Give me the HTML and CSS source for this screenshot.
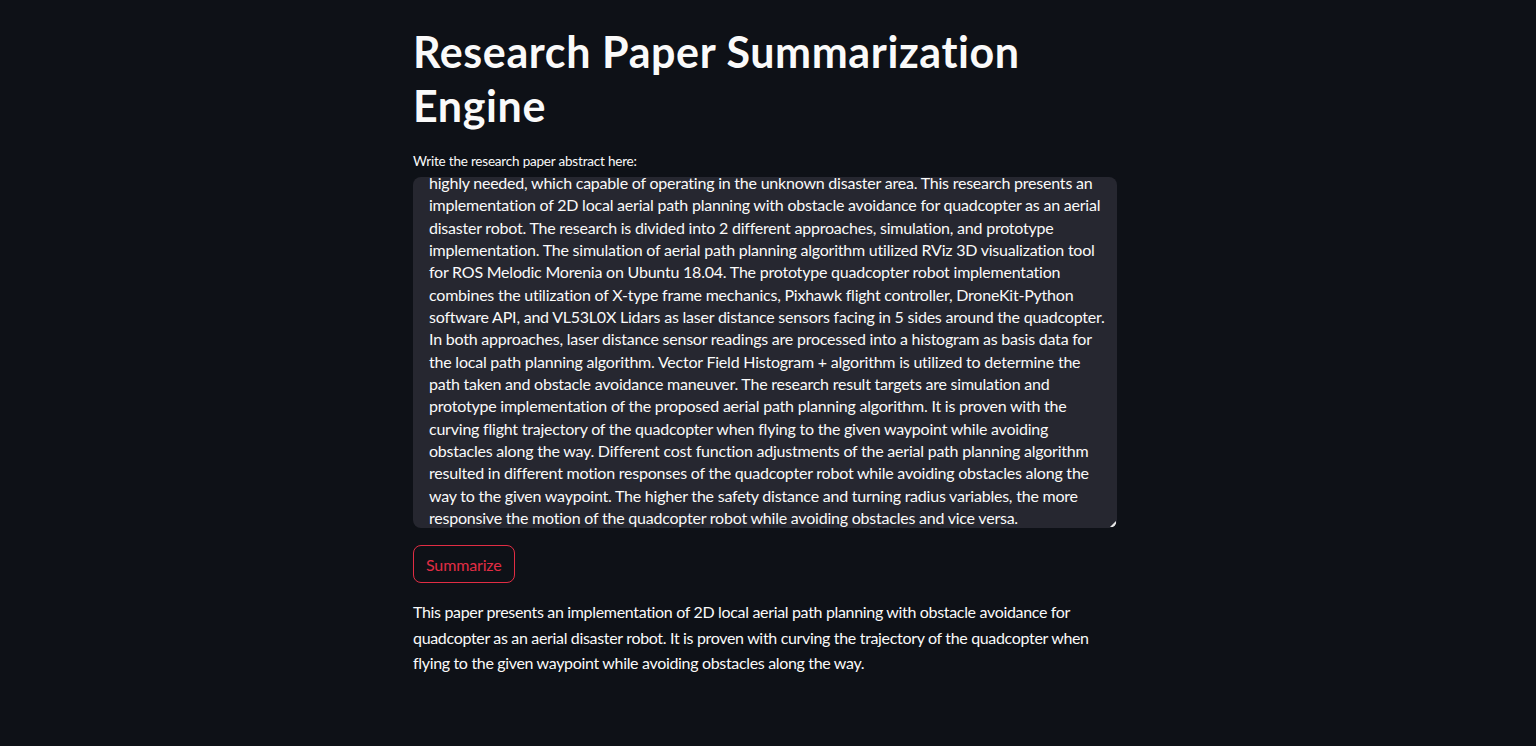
FILE: index.html
```html
<!DOCTYPE html>
<html lang="en">
<head>
<meta charset="utf-8">
<title>Research Paper Summarization Engine</title>
<link rel="stylesheet" href="styles.css">
</head>
<body>
<main class="main">
  <h1 class="title">Research Paper Summarization<br>Engine</h1>
  <label class="label">Write the research paper abstract here:</label>
  <div class="textarea">
    <div class="textarea-inner">
      <div class="line">highly needed, which capable of operating in the unknown disaster area. This research presents an</div>
      <div class="line">implementation of 2D local aerial path planning with obstacle avoidance for quadcopter as an aerial</div>
      <div class="line">disaster robot. The research is divided into 2 different approaches, simulation, and prototype</div>
      <div class="line">implementation. The simulation of aerial path planning algorithm utilized RViz 3D visualization tool</div>
      <div class="line">for ROS Melodic Morenia on Ubuntu 18.04. The prototype quadcopter robot implementation</div>
      <div class="line">combines the utilization of X-type frame mechanics, Pixhawk flight controller, DroneKit-Python</div>
      <div class="line">software API, and VL53L0X Lidars as laser distance sensors facing in 5 sides around the quadcopter.</div>
      <div class="line">In both approaches, laser distance sensor readings are processed into a histogram as basis data for</div>
      <div class="line">the local path planning algorithm. Vector Field Histogram + algorithm is utilized to determine the</div>
      <div class="line">path taken and obstacle avoidance maneuver. The research result targets are simulation and</div>
      <div class="line">prototype implementation of the proposed aerial path planning algorithm. It is proven with the</div>
      <div class="line">curving flight trajectory of the quadcopter when flying to the given waypoint while avoiding</div>
      <div class="line">obstacles along the way. Different cost function adjustments of the aerial path planning algorithm</div>
      <div class="line">resulted in different motion responses of the quadcopter robot while avoiding obstacles along the</div>
      <div class="line">way to the given waypoint. The higher the safety distance and turning radius variables, the more</div>
      <div class="line">responsive the motion of the quadcopter robot while avoiding obstacles and vice versa.</div>
    </div>
    <span class="resize"></span>
  </div>
  <button class="btn">Summarize</button>
  <div class="summary">
    <div class="line">This paper presents an implementation of 2D local aerial path planning with obstacle avoidance for</div>
    <div class="line">quadcopter as an aerial disaster robot. It is proven with curving the trajectory of the quadcopter when</div>
    <div class="line">flying to the given waypoint while avoiding obstacles along the way.</div>
  </div>
</main>
</body>
</html>
```
FILE: styles.css
```css
html, body {
  margin: 0;
  padding: 0;
  background: #0e1117;
  color: #fafafa;
  font-family: "Lato", "Noto Sans", sans-serif;
}
.main {
  width: 704px;
  margin-left: calc(50% - 355px);
  padding-top: 25px;
  display: flex;
  flex-direction: column;
  align-items: flex-start;
}
.title {
  margin: 0;
  font-size: 43px;
  font-weight: 700;
  line-height: 54px;
  letter-spacing: 0.6px;
}
.label {
  margin-top: 19px;
  font-size: 13.5px;
  line-height: 18px;
  letter-spacing: -0.2px;
}
.textarea {
  margin-top: 7px;
  width: 704px;
  height: 351px;
  box-sizing: border-box;
  background: #262730;
  border-radius: 8px;
  overflow: hidden;
  position: relative;
}
.textarea-inner {
  padding: 0 16px;
  margin-top: -5px;
  font-size: 16px;
  line-height: 22.35px;
  letter-spacing: -0.22px;
}
.line {
  white-space: nowrap;
}
.resize {
  position: absolute;
  right: 1px;
  bottom: 1px;
  width: 0;
  height: 0;
  border-left: 6px solid transparent;
  border-bottom: 6px solid #e8e8e8;
}
.btn {
  margin-top: 17px;
  height: 38px;
  padding: 0 12px;
  background: transparent;
  border: 1px solid #e12d44;
  border-radius: 8px;
  color: #e12d44;
  font-family: inherit;
  font-size: 16px;
  letter-spacing: -0.15px;
}
.summary {
  margin-top: 16px;
  font-size: 16px;
  line-height: 25.6px;
  letter-spacing: -0.33px;
}
```
